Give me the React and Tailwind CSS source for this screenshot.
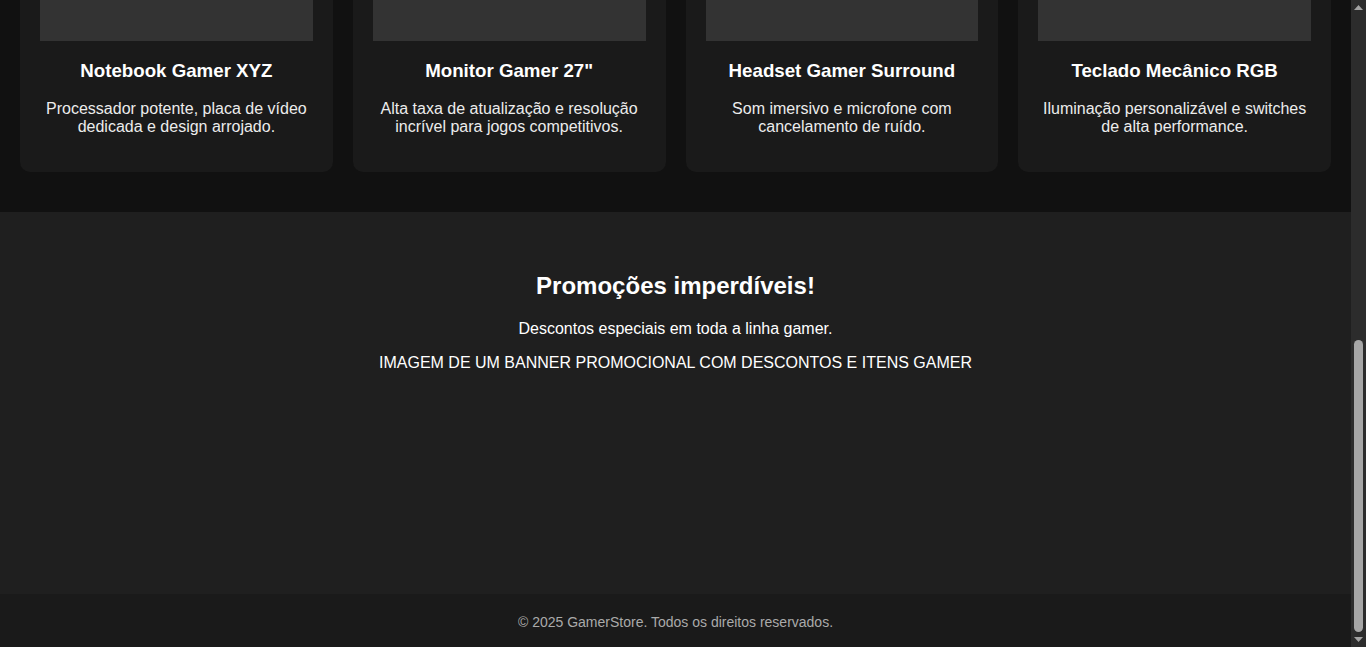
const produtos = [
  {
    nome: "Notebook Gamer XYZ",
    desc: "Processador potente, placa de vídeo dedicada e design arrojado.",
  },
  {
    nome: 'Monitor Gamer 27"',
    desc: "Alta taxa de atualização e resolução incrível para jogos competitivos.",
  },
  {
    nome: "Headset Gamer Surround",
    desc: "Som imersivo e microfone com cancelamento de ruído.",
  },
  {
    nome: "Teclado Mecânico RGB",
    desc: "Iluminação personalizável e switches de alta performance.",
  },
];

// card shown from the bottom of its image down (page is scrolled to the end)
function Card({ nome, desc }) {
  return (
    <div className="bg-[#1a1a1a] rounded-b-[10px] px-5 pb-[36px] text-center">
      <div className="h-[41px] bg-[#333333]"></div>
      <h3 className="mt-[19px] mb-[18px] text-[18.72px] leading-[22px] font-bold text-white">{nome}</h3>
      <p className="text-[16px] leading-[18px] text-[#ececec]">{desc}</p>
    </div>
  );
}

function Arrow({ up }) {
  return (
    <div className="h-[15px] flex items-center justify-center">
      <svg width="9" height="5" viewBox="0 0 9 5">
        {up ? (
          <polygon points="0,5 4.5,0 9,5" fill="#a3a3a3" />
        ) : (
          <polygon points="0,0 9,0 4.5,5" fill="#a3a3a3" />
        )}
      </svg>
    </div>
  );
}

function Scrollbar() {
  return (
    <div className="w-[15px] h-full bg-[#2c2c2c] flex flex-col">
      <Arrow up />
      <div className="flex-1 flex flex-col justify-end items-center">
        <div className="w-[9px] h-[292px] rounded-full bg-[#a6a6a6]"></div>
      </div>
      <Arrow />
    </div>
  );
}

export default function App() {
  return (
    <div className="h-screen flex overflow-hidden bg-[#111111] font-['Liberation_Sans',Arial,sans-serif] text-white">
      <div className="flex-1 flex flex-col">
        {/* Produtos */}
        <section className="bg-[#111111] px-5 pb-10">
          <div className="grid grid-cols-4 gap-5">
            {produtos.map((p) => (
              <Card key={p.nome} {...p} />
            ))}
          </div>
        </section>

        {/* Promoções */}
        <section className="bg-[#1f1f1f] pt-[60px] pb-[222px] text-center">
          <h2 className="text-[24px] leading-[28px] font-bold mb-[20px]">Promoções imperdíveis!</h2>
          <p className="text-[16px] leading-[18px] mb-4">Descontos especiais em toda a linha gamer.</p>
          <p className="text-[16px] leading-[18px]">IMAGEM DE UM BANNER PROMOCIONAL COM DESCONTOS E ITENS GAMER</p>
        </section>

        {/* Footer */}
        <footer className="flex-1 bg-[#1a1a1a] pt-5 text-center text-[14px] leading-4 text-[#aaaaaa]">
          © 2025 GamerStore. Todos os direitos reservados.
        </footer>
      </div>
      <Scrollbar />
    </div>
  );
}
